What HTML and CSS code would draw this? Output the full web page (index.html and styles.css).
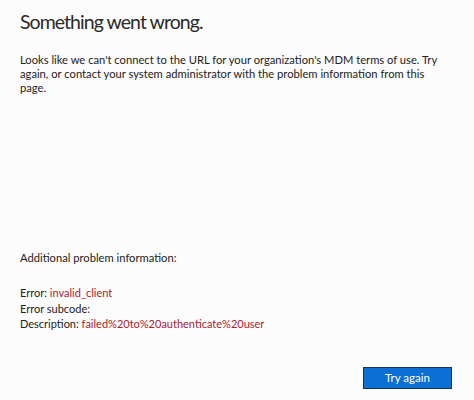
FILE: index.html
```html
<!DOCTYPE html>
<html>
<head>
<meta charset="utf-8">
<link rel="stylesheet" href="styles.css">
</head>
<body>
<div class="page">
  <h1 class="title">Something went wrong.</h1>
  <p class="intro">Looks like we can't connect to the URL for your organization's MDM terms of use. Try again, or contact your system administrator with the problem information from this page.</p>
  <div class="details">
    <p class="details-head">Additional problem information:</p>
    <div class="info">
      <div>Error: <span class="val">invalid_client</span></div>
      <div>Error subcode:</div>
      <div>Description: <span class="val">failed%20to%20authenticate%20user</span></div>
    </div>
  </div>
  <div class="actions">
    <button class="btn">Try again</button>
  </div>
</div>
</body>
</html>
```
FILE: styles.css
```css
html, body {
  margin: 0;
  padding: 0;
  background: #fcfcfc;
}
body {
  font-family: Lato, "Noto Sans", sans-serif;
  color: #222;
}
.page {
  width: 474px;
  height: 400px;
  box-sizing: border-box;
  padding: 8px 22px 0 20px;
  display: flex;
  flex-direction: column;
}
.title {
  font-size: 19.5px;
  font-weight: 400;
  margin: 0;
  line-height: 28px;
  letter-spacing: -0.95px;
  color: #2a2a2a;
}
.intro {
  margin: 17px 0 0;
  font-size: 11.2px;
  line-height: 14px;
}
.details {
  margin-top: 155px;
}
.details-head {
  margin: 0;
  font-size: 11.2px;
  line-height: 15px;
}
.info {
  margin-top: 20px;
  font-size: 11px;
  line-height: 15.5px;
}
.val {
  color: #b0202a;
}
.actions {
  display: flex;
  justify-content: flex-end;
  margin-top: 35px;
}
.btn {
  width: 89px;
  height: 22px;
  background: #0b6fd3;
  border: 1px solid #1a3550;
  color: #fff;
  font-family: Lato, sans-serif;
  font-size: 11.5px;
  padding: 0;
  margin-right: 0;
}
```
